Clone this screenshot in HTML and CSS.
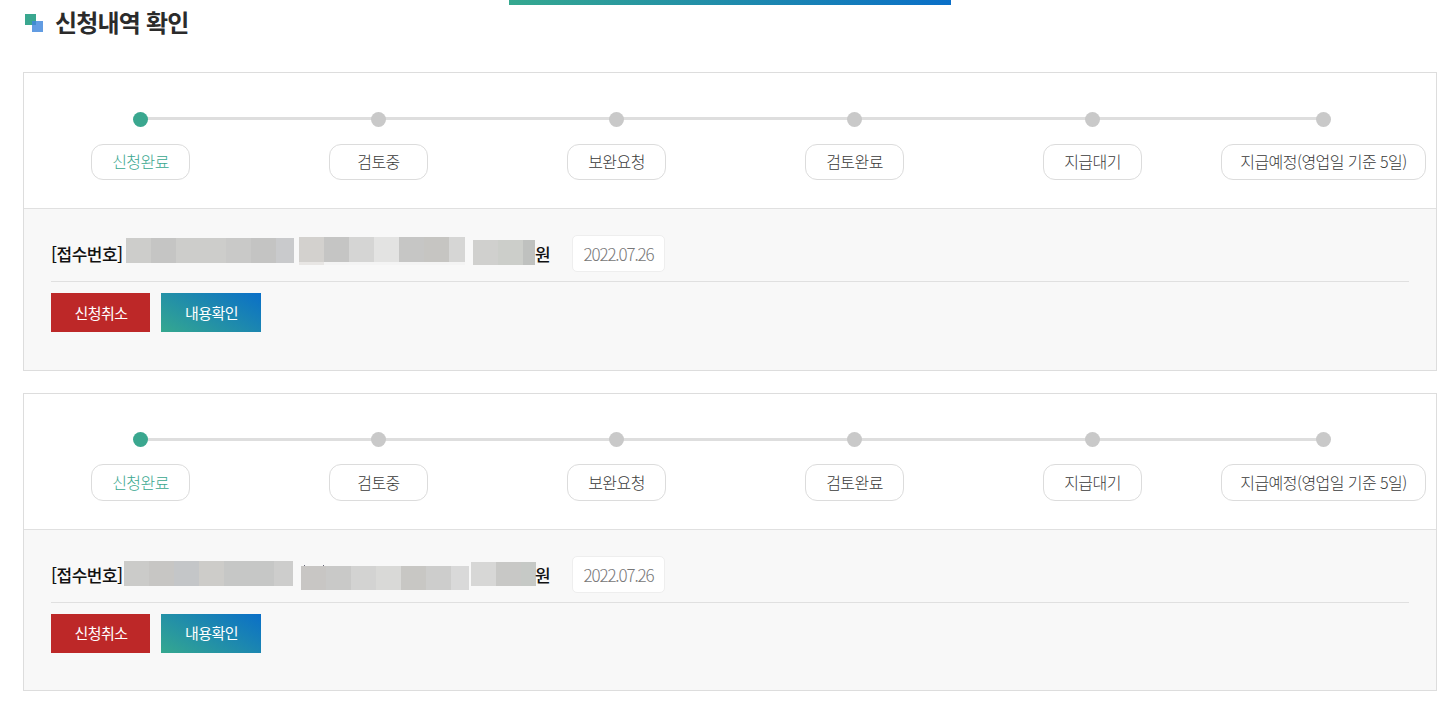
FILE: index.html
```html
<!DOCTYPE html>
<html lang="ko">
<head>
<meta charset="utf-8">
<title>신청내역 확인</title>
<link rel="stylesheet" href="styles.css">
</head>
<body>
<div class="top-bar"></div>
<main class="page">
  <h1 class="title">
    <svg class="title-icon" width="19" height="19" viewBox="0 0 19 19" aria-hidden="true">
      <rect x="0" y="0" width="11" height="11" fill="#3aa78f"/>
      <rect x="7" y="7" width="11" height="11" fill="#3f86dc" fill-opacity=".82"/>
    </svg>
    신청내역 확인
  </h1>

  <section class="card">
    <div class="stepper">
      <div class="step is-done"><span class="dot"></span><span class="pill">신청완료</span></div>
      <div class="step"><span class="dot"></span><span class="pill">검토중</span></div>
      <div class="step"><span class="dot"></span><span class="pill">보완요청</span></div>
      <div class="step"><span class="dot"></span><span class="pill">검토완료</span></div>
      <div class="step step-near"><span class="dot"></span><span class="pill">지급대기</span></div>
      <div class="step step-last"><span class="dot"></span><span class="pill pill-wide">지급예정(영업일 기준 5일)</span></div>
    </div>
    <div class="panel">
      <div class="info">
        <strong class="label">[접수번호]</strong>
        <span class="mosaic a1"></span>
        <span class="mosaic a2"></span>
        <span class="mosaic a3"></span>
        <strong class="won">원</strong>
        <span class="date">2022.07.26</span>
      </div>
      <div class="actions">
        <button class="btn btn-cancel" type="button">신청취소</button>
        <button class="btn btn-view" type="button">내용확인</button>
      </div>
    </div>
  </section>

  <section class="card">
    <div class="stepper">
      <div class="step is-done"><span class="dot"></span><span class="pill">신청완료</span></div>
      <div class="step"><span class="dot"></span><span class="pill">검토중</span></div>
      <div class="step"><span class="dot"></span><span class="pill">보완요청</span></div>
      <div class="step"><span class="dot"></span><span class="pill">검토완료</span></div>
      <div class="step step-near"><span class="dot"></span><span class="pill">지급대기</span></div>
      <div class="step step-last"><span class="dot"></span><span class="pill pill-wide">지급예정(영업일 기준 5일)</span></div>
    </div>
    <div class="panel">
      <div class="info">
        <strong class="label">[접수번호]</strong>
        <span class="mosaic b1"></span>
        <span class="mosaic b2"></span>
        <span class="mosaic b3"></span>
        <strong class="won">원</strong>
        <span class="date">2022.07.26</span>
      </div>
      <div class="actions">
        <button class="btn btn-cancel" type="button">신청취소</button>
        <button class="btn btn-view" type="button">내용확인</button>
      </div>
    </div>
  </section>
</main>
</body>
</html>
```

FILE: styles.css
```css
* { box-sizing: border-box; }
html, body { margin: 0; padding: 0; }
body {
  background: #fff;
  color: #222;
  font-family: "Noto Sans CJK KR", "Noto Sans", sans-serif;
  font-size: 15px;
  overflow: hidden;
  height: 709px;
}
.top-bar {
  position: absolute;
  top: 0;
  left: 509px;
  width: 442px;
  height: 5px;
  background: linear-gradient(90deg, #35a88f, #0a6fc8);
}
.page { padding: 0 9px 0 23px; }
.title {
  display: flex;
  align-items: center;
  gap: 11px;
  height: 72.3px;
  margin: 0;
  padding: 0 0 30px 2px;
  font-size: 24px;
  font-weight: 700;
  letter-spacing: -0.8px;
  color: #2b2b2b;
}
.title-icon { flex: none; margin-top: 4px; }
.card {
  height: 298.5px;
  margin-bottom: 22px;
  border: 1px solid #ddd;
  display: flex;
  flex-direction: column;
}
.stepper {
  position: relative;
  display: flex;
  padding: 38.4px 0 28.1px 67px;
}
.stepper::before {
  content: "";
  position: absolute;
  top: 44px;
  left: 116px;
  right: 112px;
  height: 3px;
  background: #dedede;
}
.step {
  position: relative;
  display: flex;
  flex-direction: column;
  align-items: center;
  gap: 17.1px;
  margin-right: 139px;
}
.step-near { margin-right: 79px; }
.step-last { margin-right: 0; }
.dot {
  width: 15px;
  height: 15px;
  border-radius: 50%;
  background: #c9c9c9;
}
.pill {
  display: flex;
  align-items: center;
  justify-content: center;
  width: 99px;
  height: 36.5px;
  padding-bottom: 2px;
  border: 1px solid #dcdcdc;
  border-radius: 12px;
  background: #fff;
  color: #3a3a3a;
  font-size: 16px;
  font-weight: 300;
  letter-spacing: -0.55px;
}
.pill-wide { width: 205px; }
.is-done .dot { background: #3aa78f; }
.is-done .pill { color: #3aa78f; }
.panel {
  flex: 1;
  padding: 26px 27px 0;
  background: #f8f8f8;
  border-top: 1px solid #e0e0e0;
}
.info {
  display: flex;
  align-items: center;
  height: 47px;
  padding-bottom: 9px;
  border-bottom: 1px solid #e0e0e0;
}
.label, .won {
  flex: none;
  font-size: 17px;
  font-weight: 500;
  letter-spacing: -0.5px;
  color: #111;
}
.label { width: 72px; white-space: nowrap; }
.won { width: 15px; }
.mosaic { flex: none; align-self: flex-start; height: 25px; background-repeat: no-repeat; }
.a1 {
  width: 168px; margin: 2.6px 0 0 3px;
  background-image: linear-gradient(90deg, #cdcdcb 0 25px, #c5c5c4 25px 50px, #cdcdcb 50px 100px, #c9c9c8 100px 125px, #c4c4c3 125px 150px, #c9cacc 150px);
}
.a2 {
  width: 166px; height: 28px; margin: 1.6px 0 0 5px;
  background-color: #f4f4f4;
  background-size: 100% 25px, 25px 100%;
  background-image:
    linear-gradient(90deg, #d3d1ce 0 25px, #c5c5c4 25px 50px, #d5d5d4 50px 75px, #e3e3e2 75px 100px, #c6c6c5 100px 125px, #c6c5c2 125px 150px, #d6d6d5 150px),
    linear-gradient(#e8e6e4, #e8e6e4);
}
.a3 {
  width: 62px; margin: 4.6px 0 0 8px;
  background-image: linear-gradient(90deg, #d0d0ce 0 25px, #ccceca 25px 50px, #bfc1bf 50px);
}
.b1 {
  width: 169px; margin: 5.6px 0 0 1px;
  background-image: linear-gradient(90deg, #cbcbc9 0 25px, #c7c6c4 25px 50px, #c4c6c8 50px 75px, #cdccc9 75px 100px, #c6c7c6 100px 150px, #cdcdcc 150px);
}
.b2 {
  width: 168px; height: 25px; margin: 9.6px 0 0 8px;
  background-size: 100% 24px, 1px 1px, 1px 1px;
  background-position: 0 1px, 3px 0, 22px 0;
  background-image:
    linear-gradient(90deg, #c8c6c4 0 25px, #c9c9c8 25px 50px, #d3d3d2 50px 75px, #d9d9d7 75px 100px, #c8c7c4 100px 125px, #cdcdcc 125px 150px, #d9d9d9 150px),
    linear-gradient(#667, #667),
    linear-gradient(#667, #667);
}
.b3 {
  width: 65px; height: 24px; margin: 6.6px -1px 0 2px;
  background-image: linear-gradient(90deg, #d7d7d6 0 25px, #c8c8c6 25px 50px, #c6c9c6 50px);
}
.date {
  flex: none;
  display: flex;
  align-items: center;
  justify-content: center;
  width: 93px;
  height: 37px;
  margin-left: 22px;
  border: 1px solid #eee;
  border-radius: 5px;
  background: #fff;
  color: #777;
  font-size: 17px;
  font-weight: 300;
  letter-spacing: -1.15px;
}
.actions {
  display: flex;
  gap: 11px;
  margin-top: 11px;
}
.btn {
  height: 39px;
  padding: 0 0 1px 1px;
  border: 0;
  color: #fff;
  font-family: inherit;
  font-size: 15px;
  font-weight: 400;
  letter-spacing: -0.6px;
}
.btn-cancel { width: 99px; background: #bd2828; }
.btn-view { width: 100px; background: linear-gradient(30deg, #35a88f, #0a6fc8); }
```
